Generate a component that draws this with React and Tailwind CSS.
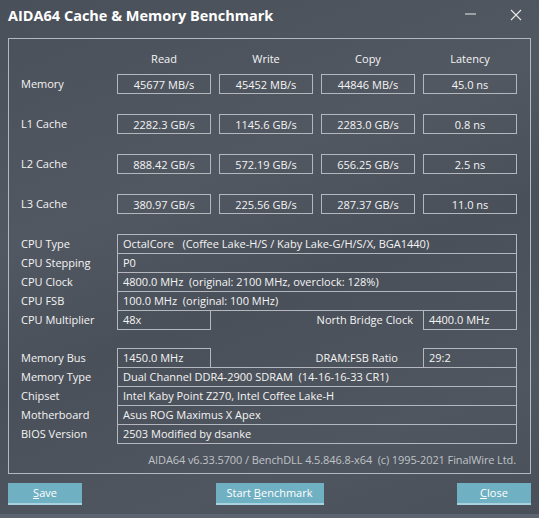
import React from "react";

const bench = [
  ["Memory", "45677 MB/s", "45452 MB/s", "44846 MB/s", "45.0 ns"],
  ["L1 Cache", "2282.3 GB/s", "1145.6 GB/s", "2283.0 GB/s", "0.8 ns"],
  ["L2 Cache", "888.42 GB/s", "572.19 GB/s", "656.25 GB/s", "2.5 ns"],
  ["L3 Cache", "380.97 GB/s", "225.56 GB/s", "287.37 GB/s", "11.0 ns"],
];

function Val({ children }) {
  return (
    <div className="h-[20px] border border-[#b4b8be] flex items-center justify-center leading-none">
      {children}
    </div>
  );
}

function InfoRow({ label, value, first }) {
  return (
    <div className={"flex h-[20px] items-center " + (first ? "" : "-mt-px")}>
      <div className="w-[96px]">{label}</div>
      <div className="w-[400px] h-[20px] border border-[#b4b8be] flex items-center pl-[5px] whitespace-pre">
        {value}
      </div>
    </div>
  );
}

function SplitRow({ label, value, label2, value2, pr, first }) {
  return (
    <div className={"flex h-[20px] items-center " + (first ? "" : "-mt-px")}>
      <div className="w-[96px]">{label}</div>
      <div className="w-[94px] h-[20px] border border-[#b4b8be] flex items-center pl-[5px]">{value}</div>
      <div className={"w-[212px] text-right " + pr}>{label2}</div>
      <div className="w-[94px] h-[20px] border border-[#b4b8be] flex items-center pl-[5px]">{value2}</div>
    </div>
  );
}

function Btn({ w, children }) {
  return (
    <div className={"h-[22px] bg-[#6fb0c2] border-b-2 border-[#a8d3de] flex items-center justify-center text-white " + w}>
      <span className="whitespace-pre">{children}</span>
    </div>
  );
}

export default function App() {
  return (
    <div className="w-[539px] h-[518px] bg-[#4b515b] bg-[linear-gradient(160deg,#4a505a_0%,#525862_35%,#4a505a_55%,#50565f_80%,#4a505a_100%)] flex flex-col overflow-hidden text-[11px] text-[#f4f4f4] font-['Open_Sans',sans-serif] relative">
      <div className="h-[38px] flex items-start shrink-0">
        <div className="pl-[8px] pt-[6px] text-[14.5px] font-bold text-white leading-[20px]">
          AIDA64 Cache &amp; Memory Benchmark
        </div>
        <svg className="absolute left-[465px] top-[13px]" width="11" height="2" viewBox="0 0 11 2">
          <rect x="0" y="0.5" width="11" height="1" fill="#e8e8e8" />
        </svg>
        <svg className="absolute left-[510px] top-[9px]" width="12" height="12" viewBox="0 0 12 12">
          <path d="M1 1 L11 11 M11 1 L1 11" stroke="#e8e8e8" strokeWidth="1.1" fill="none" />
        </svg>
      </div>

      <div className="ml-[8px] w-[523px] h-[436px] border border-[#b4b8be] shrink-0 flex flex-col pl-[12px]">
        <div className="grid grid-cols-[88px_94px_94px_94px_94px] gap-x-[8px] h-[16px] mt-[11px] items-center leading-none">
          <div></div>
          <div className="text-center">Read</div>
          <div className="text-center">Write</div>
          <div className="text-center">Copy</div>
          <div className="text-center">Latency</div>
        </div>
        <div className="flex flex-col gap-[20px] mt-[8px]">
          {bench.map((r) => (
            <div key={r[0]} className="grid grid-cols-[88px_94px_94px_94px_94px] gap-x-[8px] h-[20px] items-center">
              <div>{r[0]}</div>
              <Val>{r[1]}</Val>
              <Val>{r[2]}</Val>
              <Val>{r[3]}</Val>
              <Val>{r[4]}</Val>
            </div>
          ))}
        </div>

        <div className="flex flex-col mt-[20px]">
          <InfoRow first label="CPU Type" value="OctalCore   (Coffee Lake-H/S / Kaby Lake-G/H/S/X, BGA1440)" />
          <InfoRow label="CPU Stepping" value="P0" />
          <InfoRow label="CPU Clock" value="4800.0 MHz  (original: 2100 MHz, overclock: 128%)" />
          <InfoRow label="CPU FSB" value="100.0 MHz  (original: 100 MHz)" />
          <SplitRow label="CPU Multiplier" value="48x" label2="North Bridge Clock" value2="4400.0 MHz" pr="pr-[10px]" />
        </div>

        <div className="flex flex-col mt-[18px]">
          <SplitRow first label="Memory Bus" value="1450.0 MHz" label2="DRAM:FSB Ratio" value2="29:2" pr="pr-[25px]" />
          <InfoRow label="Memory Type" value="Dual Channel DDR4-2900 SDRAM  (14-16-16-33 CR1)" />
          <InfoRow label="Chipset" value="Intel Kaby Point Z270, Intel Coffee Lake-H" />
          <InfoRow label="Motherboard" value="Asus ROG Maximus X Apex" />
          <InfoRow label="BIOS Version" value="2503 Modified by dsanke" />
        </div>

        <div className="mt-[8px] h-[16px] leading-[16px] text-right pr-[14px] text-[#bfc3c8] whitespace-pre tracking-[-0.1px]">
          AIDA64 v6.33.5700 / BenchDLL 4.5.846.8-x64  (c) 1995-2021 FinalWire Ltd.
        </div>
      </div>

      <div className="ml-[8px] w-[523px] mt-[9px] flex justify-between shrink-0">
        <Btn w="w-[74px]"><span className="underline">S</span>ave</Btn>
        <Btn w="w-[108px]">Start <span className="underline">B</span>enchmark</Btn>
        <Btn w="w-[74px]"><span className="underline">C</span>lose</Btn>
      </div>

      <div className="mt-auto h-[4px] bg-[#5c6470] shrink-0"></div>
    </div>
  );
}
